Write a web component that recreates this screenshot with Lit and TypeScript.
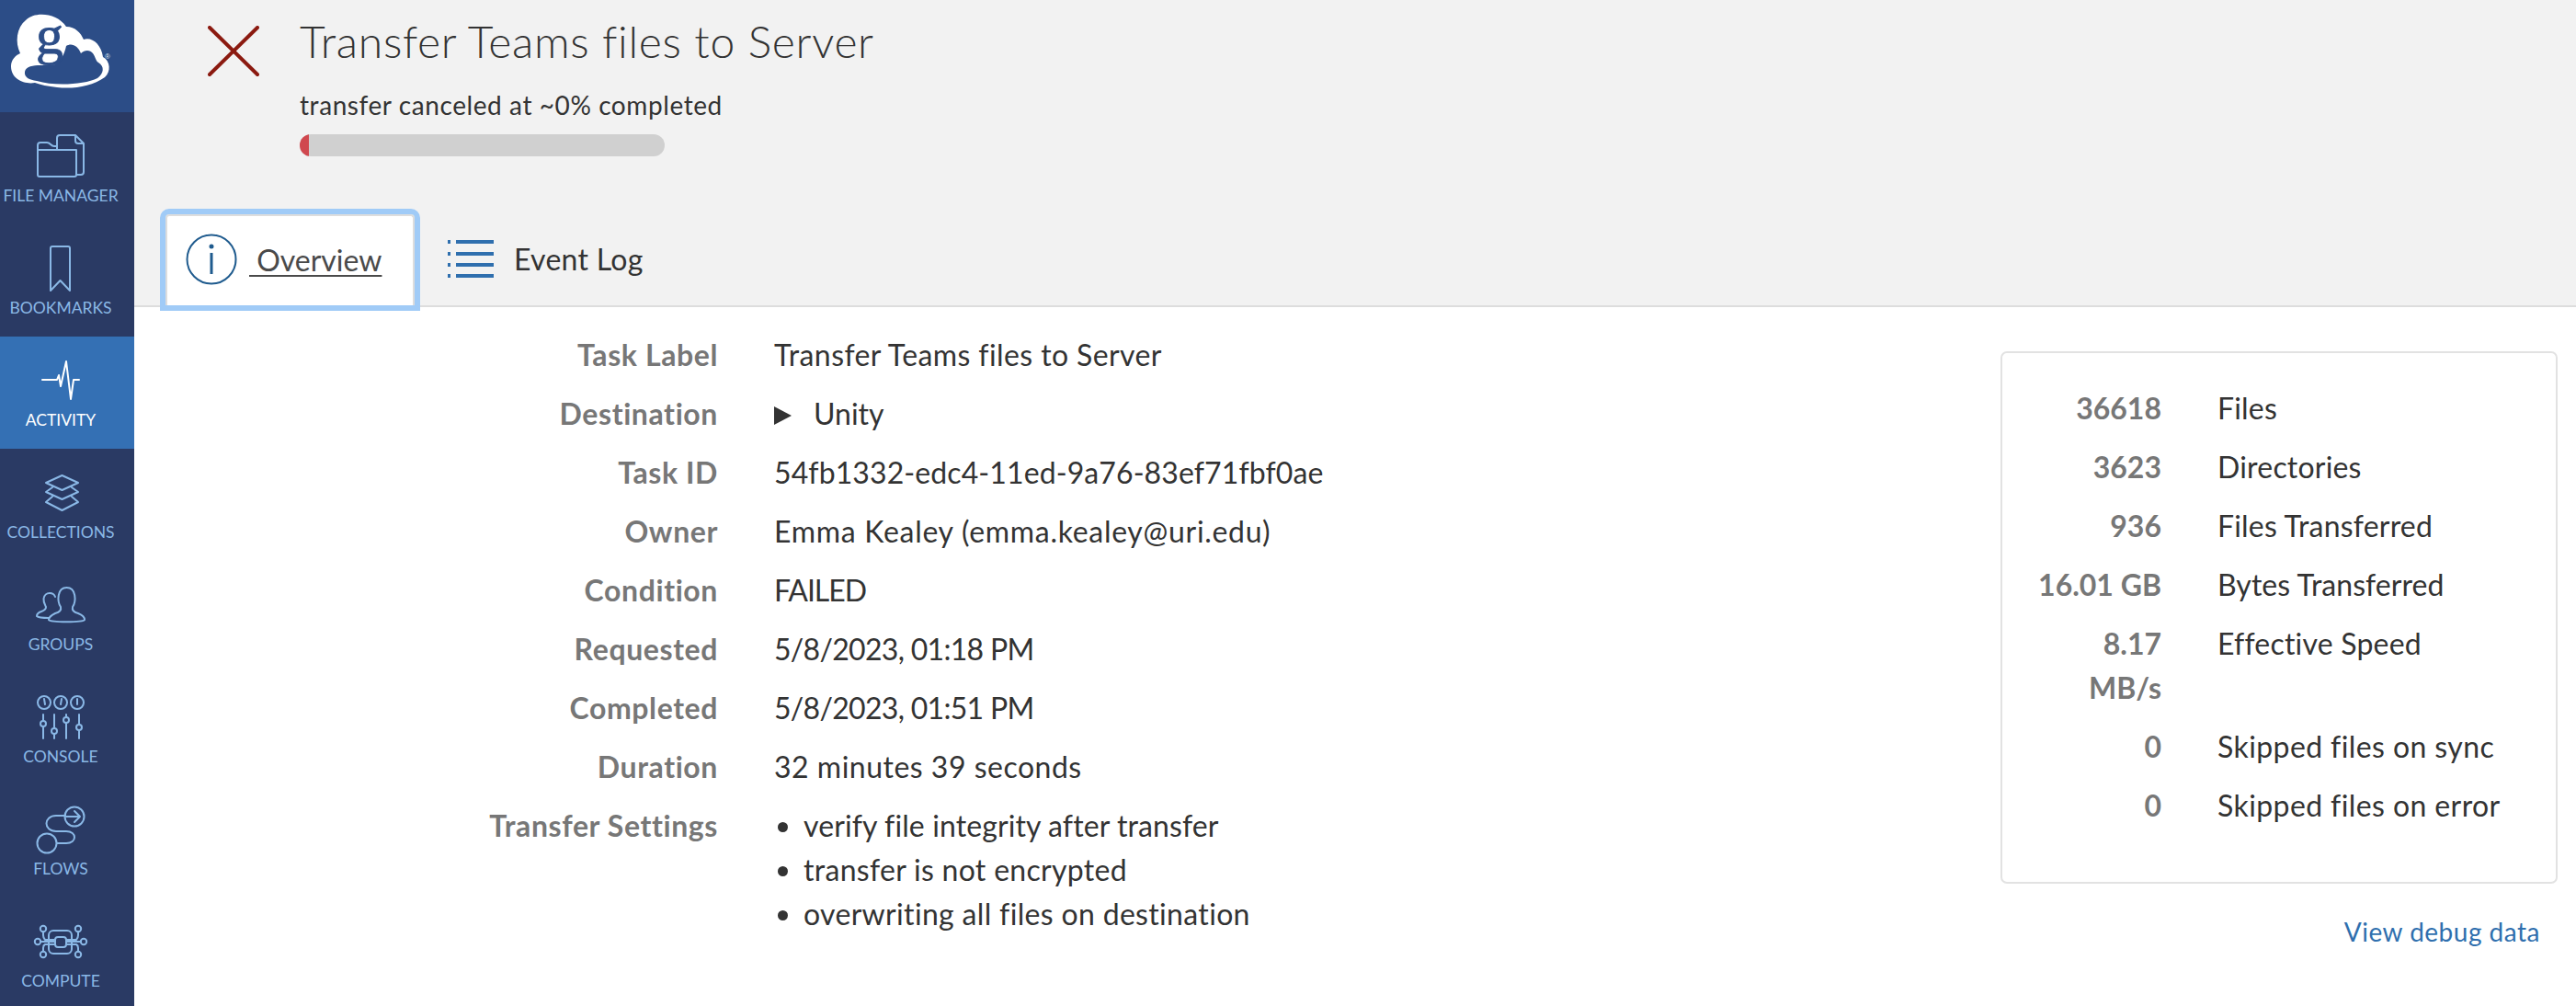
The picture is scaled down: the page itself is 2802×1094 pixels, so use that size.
import { LitElement, html, css, svg } from "lit";
import { customElement } from "lit/decorators.js";

const navItems = [
  { label: "FILE MANAGER", icon: svg`<path d="M41 41H83V68a2 2 0 0 1-2 2H43a2 2 0 0 1-2-2ZM41 41V36a3 3 0 0 1 3-3h7c4 0 4 4 8 4h3"/><path d="M62 41V28a3 3 0 0 1 3-3h17l9 9V65a3 3 0 0 1-3 3h-5M82 25v6a3 3 0 0 0 3 3h6"/>` },
  { label: "BOOKMARKS", icon: svg`<path d="M55 26a2 2 0 0 1 2-2H74a2 2 0 0 1 2 2V72L65.500 61 55 72Z"/>` },
  { label: "ACTIVITY", active: true, icon: svg`<path d="M46 47H62L64 42 66 54 72 27 77 68 80 47H86"/>` },
  { label: "COLLECTIONS", icon: svg`<path d="M67.500 29 85 37 67.500 45 50 37ZM57 42 50 47 67.500 55 85 47 78 42M57 52 50 58 67.500 67 85 58 78 52"/>` },
  { label: "GROUPS", icon: svg`<path d="M66 50C62 44 62 29 72.500 29S83 44 79 50C78 54 81 56 85 57 90 59 92 61 92 64 90 67 55 67 53 64 53 61 56 59 60 57 64 56 67 54 66 50Z"/><path d="M60 39C59 36 56 35 54 35 51 35 48 37 47.500 41 47 45 49 48 50 50 50 53 48 54 45 55 42 56 40 58 40 60 42 62 48 62 53 62"/>` },
  { label: "CONSOLE", icon: svg`<circle cx="48" cy="32" r="7"/><circle cx="66" cy="32" r="7"/><circle cx="84" cy="32" r="7"/><path d="M48 28l1 6M67 28l-1 6M84 28v6M47 45V52M47 58V71M59 45V60M59 66V71M72 45V48M72 54V71M86 45V56M86 62V71"/><circle cx="47" cy="55" r="3"/><circle cx="59" cy="63" r="3"/><circle cx="72" cy="51" r="3"/><circle cx="86" cy="59" r="3"/>` },
  { label: "FLOWS", icon: svg`<circle cx="51" cy="63" r="10.500"/><circle cx="81" cy="34" r="10.500"/><path d="M72 34H87M81 28l6 6-6 6M71 33H61C47 33 47 50 61 50H72C84 50 84 63 72 63H62"/>` },
  { label: "COMPUTE", icon: svg`<rect x="53" y="36" width="25" height="25" rx="5"/><rect x="60" y="43" width="12" height="11" rx="3"/><circle cx="47" cy="34" r="3.200"/><circle cx="85" cy="34" r="3.200"/><circle cx="47" cy="62" r="3.200"/><circle cx="85" cy="62" r="3.200"/><circle cx="41" cy="48" r="3.200"/><circle cx="91" cy="48" r="3.200"/><path d="M44 48H60M72 48H88M49 46H60M72 46H83M49 51H60M72 51H83M47 37V41C47 44 49 46 49 46M85 37V41C85 44 83 46 83 46M47 59V55C47 52 49 51 49 51M85 59V55C85 52 83 51 83 51"/>` },
];

// [label, value, letter-spacing in px that fits the value's measured width]
const details: [string, unknown, number][] = [
  ["Task Label", "Transfer Teams files to Server", 0.4],
  ["Destination", html`<span class="tri"></span>Unity`, 0],
  ["Task ID", "54fb1332-edc4-11ed-9a76-83ef71fbf0ae", 0.1],
  ["Owner", "Emma Kealey (emma.kealey@uri.edu)", 0.7],
  ["Condition", "FAILED", -1],
  ["Requested", "5/8/2023, 01:18 PM", -0.7],
  ["Completed", "5/8/2023, 01:51 PM", -0.7],
  ["Duration", "32 minutes 39 seconds", 0.5],
];

const settings: [string, number][] = [
  ["verify file integrity after transfer", 0.1],
  ["transfer is not encrypted", 0.3],
  ["overwriting all files on destination", 0.33],
];

const stats: [string, string, number][] = [
  ["36618", "Files", 0.2],
  ["3623", "Directories", 0.2],
  ["936", "Files Transferred", 0.2],
  ["16.01 GB", "Bytes Transferred", 0.05],
  ["8.17 MB/s", "Effective Speed", 0.2],
  ["0", "Skipped files on sync", 0.4],
  ["0", "Skipped files on error", 0.4],
];

@customElement("app-root")
export class AppRoot extends LitElement {
  static styles = css`
    :host { display: flex; height: 1094px; overflow: hidden; font-family: Lato, "Open Sans", sans-serif; color: #333; background: #fff; }
    .side { width: 146px; flex: none; background: #2a3a64; overflow: hidden; }
    .logo { height: 122px; background: #2c4d87; }
    .logo svg { display: block; }
    .nav { height: 122px; padding-right: 14px; color: #8ab8e6; display: flex; flex-direction: column; align-items: center; }
    .nav.active { background: #3470b4; color: #fff; }
    .nav svg { display: block; flex: none; margin-top: 16px; width: 96px; height: 64px; fill: none; stroke: currentColor; stroke-width: 2; stroke-linejoin: round; stroke-linecap: round; }
    .nav span { font-size: 17.500px; line-height: 24px; white-space: nowrap; margin-top: -1px; }
    .main { flex: 1; min-width: 0; display: flex; flex-direction: column; }
    .head { height: 334px; box-sizing: border-box; background: #f2f2f2; border-bottom: 2px solid #ddd; padding-left: 34px; display: flex; flex-direction: column; }
    .status { display: flex; height: 232px; }
    .x { width: 56px; height: 56px; margin: 28px 0 0 46px; flex: none; stroke: #8b1a10; stroke-width: 4; stroke-linecap: round; fill: none; }
    .info { margin-left: 44px; }
    h1 { margin: 15px 0 0; font-size: 48px; line-height: 60px; font-weight: 300; white-space: nowrap; letter-spacing: .7px; }
    .sub { margin-top: 21px; font-size: 28px; line-height: 36px; letter-spacing: .58px; }
    .bar { margin-top: 14px; width: 397px; height: 24px; border-radius: 12px; background: #d0d0d0; overflow: hidden; }
    .bar i { display: block; width: 10px; height: 100%; background: #d0484f; }
    .tabs { display: flex; height: 100px; align-items: stretch; margin-top: 2px; }
    .tab { display: flex; align-items: center; font-size: 32px; white-space: nowrap; padding-bottom: 2px; box-sizing: border-box; }
    .tab.on { width: 271px; background: #fff; color: #4a4a4a; outline: 6px solid #a0cbf7; border: 2px solid #ddd; border-bottom: 0; border-radius: 4px 4px 0 0; padding-left: 20px; position: relative; }
    .tab.on u { margin-left: 13px; text-decoration-thickness: 2px; text-underline-offset: 4px; }
    .tab.on svg { width: 56px; height: 56px; flex: none; fill: none; stroke: #1f5b8e; stroke-width: 2; }
    .tab.log { margin-left: 34px; letter-spacing: .3px; }
    .tab.log svg { width: 52px; height: 44px; flex: none; margin-right: 22px; stroke: #2f6fae; stroke-width: 4; }
    .body { flex: 1; display: flex; justify-content: space-between; padding-right: 20px; font-size: 32px; line-height: 48px; }
    dl { margin: 28px 0 0; display: grid; grid-template-columns: 635px 1fr; column-gap: 61px; row-gap: 16px; align-content: start; }
    dt { text-align: right; font-weight: 700; color: #777; letter-spacing: .6px; }
    dd { margin: 0; white-space: nowrap; }
    .tri { display: inline-block; border-left: 19px solid #333; border-top: 10px solid transparent; border-bottom: 10px solid transparent; margin-right: 24px; }
    ul { margin: 0; padding: 0 0 0 32px; }
    aside { width: 606px; flex: none; margin-top: 48px; }
    .card { box-sizing: border-box; height: 579px; border: 2px solid #e2e2e2; border-radius: 7px; padding: 36px 0 0 35px; display: grid; grid-template-columns: 138px 1fr; column-gap: 61px; row-gap: 16px; align-content: start; }
    .num { text-align: right; font-weight: 700; color: #777; }
    .lab { white-space: nowrap; }
    .debug { display: block; text-align: right; padding-right: 19px; margin-top: 28px; font-size: 28px; line-height: 48px; color: #2f6fae; letter-spacing: .5px; }
  `;

  render() {
    return html`
      <div class="side">
        <div class="logo">
          <svg width="146" height="122" viewBox="0 0 146 122">
            <path fill="#fff" d="M22 58C16 46 18 30 28 22 38 12 62 14 72 29 82 29 88 36 91 43 100 40 110 48 112 62 120 66 121 78 114 84 100 94 80 97 62 95 52 94 44 92 38 90 26 92 12 86 12 72 12 65 17 60 22 58Z"/>
            <path fill="#2c4d87" d="M27 78C28 72 36 71 44 71H56C64 71 70 60 72 50 78 46 85 50 88 58 92 54 98 54 101 58 104 62 104 66 107 68 114 72 113 80 106 85 92 92 60 94 40 88 32 87 26 84 27 78Z"/>
            <text x="39" y="58" font-family="Liberation Serif, serif" font-size="60" stroke="#2c4d87" stroke-width=".8" fill="#2c4d87">g</text>
            <text x="114" y="64" font-family="Liberation Sans, sans-serif" font-size="8" fill="#dfe8f4">®</text>
          </svg>
        </div>
        ${navItems.map(n => html`
          <div class="nav ${n.active ? "active" : ""}">
            <svg viewBox="18 16 96 64">${n.icon}</svg>
            <span>${n.label}</span>
          </div>`)}
      </div>
      <div class="main">
        <div class="head">
          <div class="status">
            <svg class="x" viewBox="0 0 56 56"><path d="M2 2 54 53M54 2 2 53"/></svg>
            <div class="info">
              <h1>Transfer Teams files to Server</h1>
              <div class="sub">transfer canceled at ~0% completed</div>
              <div class="bar"><i></i></div>
            </div>
          </div>
          <div class="tabs">
            <div class="tab on">
              <svg viewBox="0 0 56 56"><circle cx="28" cy="28" r="26.500"/><circle cx="28" cy="14" r="1.500" fill="#1f5b8e"/><path d="M28 21V44" stroke-width="3"/></svg>
              <u>&nbsp;Overview</u>
            </div>
            <div class="tab log">
              <svg viewBox="0 0 52 44"><path d="M2 4h3M11 4H52M2 17h3M11 17H52M2 29h3M11 29H52M2 41h3M11 41H52"/></svg>
              Event Log
            </div>
          </div>
        </div>
        <div class="body">
          <dl>
            ${details.map(([k, v, ls]) => html`<dt>${k}</dt><dd style="letter-spacing:${ls}px">${v}</dd>`)}
            <dt>Transfer Settings</dt>
            <dd><ul>${settings.map(([s, ls]) => html`<li style="letter-spacing:${ls}px">${s}</li>`)}</ul></dd>
          </dl>
          <aside>
            <div class="card">
              ${stats.map(([n, l, ls]) => html`<div class="num">${n}</div><div class="lab" style="letter-spacing:${ls}px">${l}</div>`)}
            </div>
            <a class="debug">View debug data</a>
          </aside>
        </div>
      </div>
    `;
  }
}
